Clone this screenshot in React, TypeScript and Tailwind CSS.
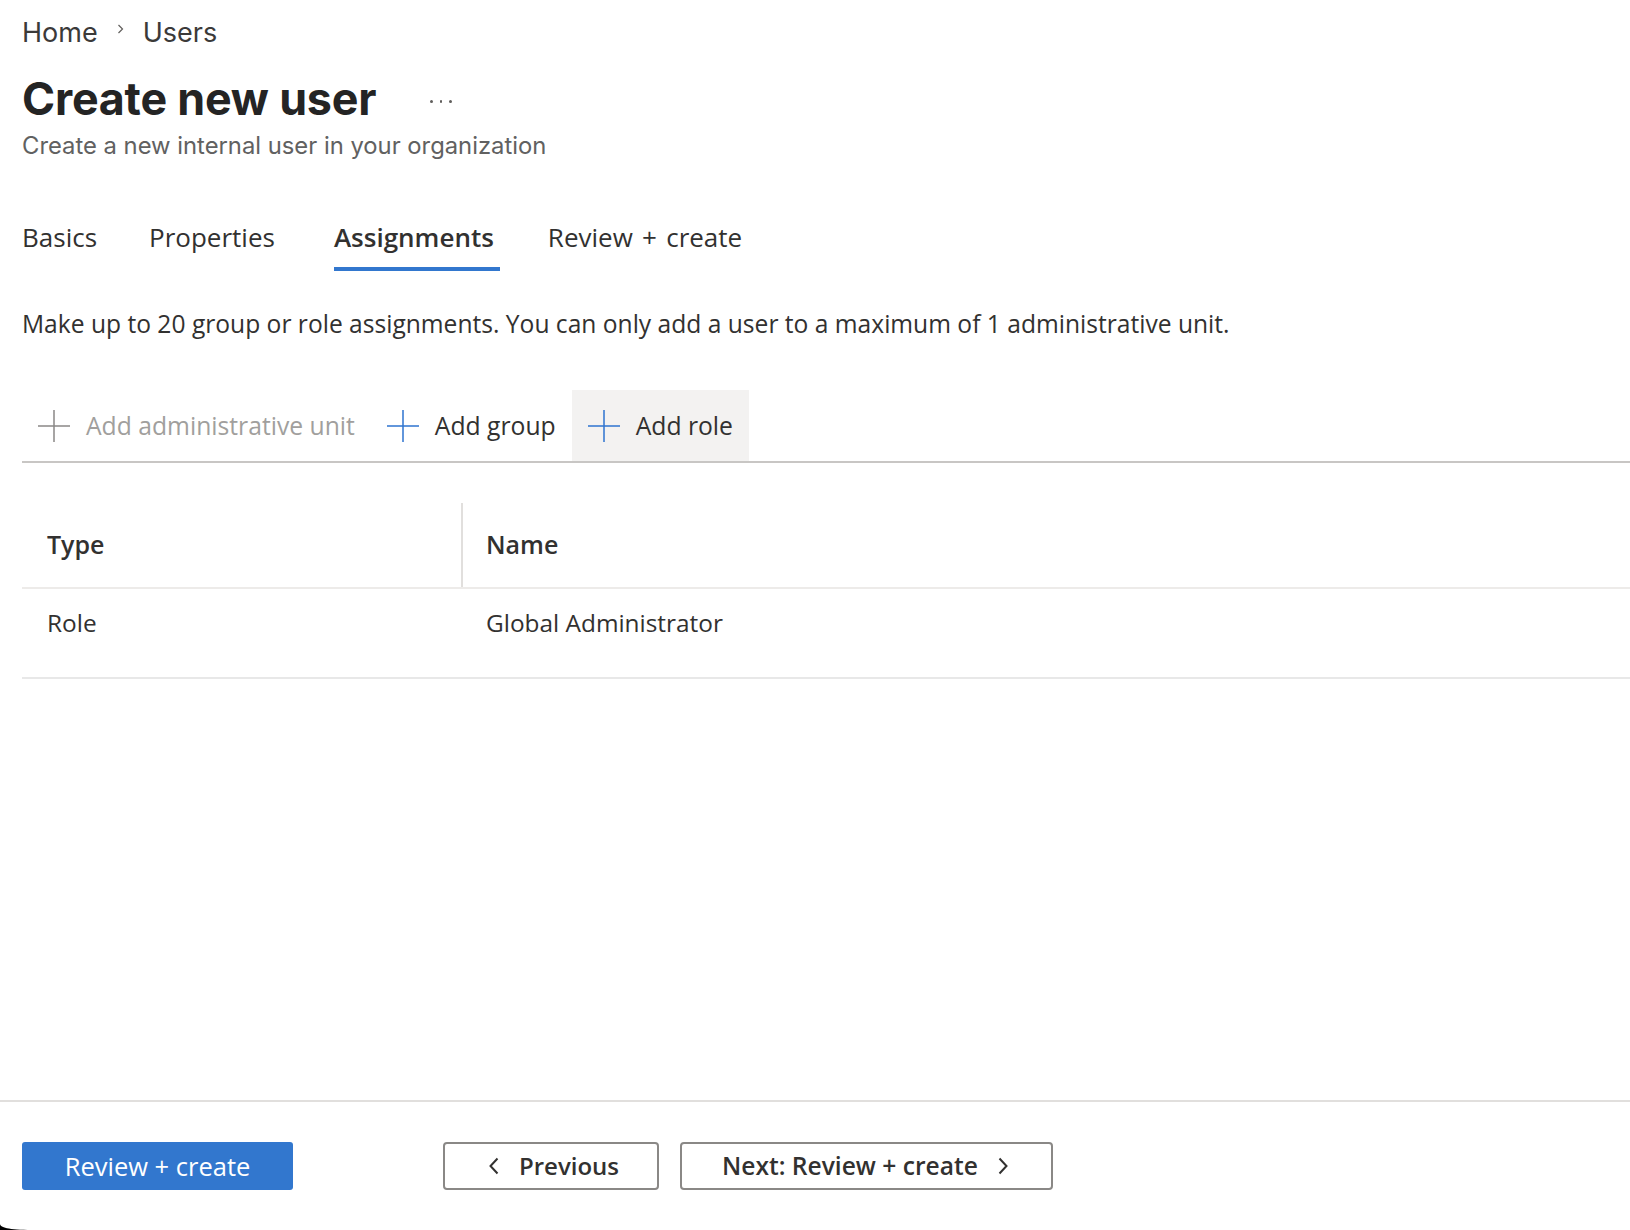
import React from 'react';

const ui = { fontFamily: '"Open Sans", "Noto Sans", sans-serif' };
const head = { fontFamily: 'Inter, "Liberation Sans", sans-serif' };

const PlusIcon: React.FC<{ color: string }> = ({ color }) => (
  <svg width="32" height="32" viewBox="0 0 32 32" fill="none">
    <path d="M16 0v32M0 16h32" stroke={color} strokeWidth="1.5" />
  </svg>
);

const Chevron: React.FC<{ dir: 'left' | 'right' }> = ({ dir }) => (
  <svg width="11" height="18" viewBox="0 0 11 18" fill="none">
    <path
      d={dir === 'left' ? 'M9.5 1.5L2.5 9l7 7.5' : 'M1.5 1.5L8.5 9l-7 7.5'}
      stroke="#323130"
      strokeWidth="2"
    />
  </svg>
);

const tabs = [
  { label: 'Basics', gap: 'mr-[52px]' },
  { label: 'Properties', gap: 'mr-[59px]' },
  { label: 'Assignments', gap: 'mr-[54px]' },
  { label: 'Review + create', gap: 'mr-0 [word-spacing:2.5px]' },
];

const toolbar = [
  { label: 'Add administrative unit', disabled: true, active: false },
  { label: 'Add group', disabled: false, active: false },
  { label: 'Add role', disabled: false, active: true },
];

export default function App() {
  return (
    <div className="relative w-full h-[1230px] bg-white flex flex-col text-[#323130]" style={ui}>
      <div className="flex-1 pl-[22px]">
        {/* header */}
        <div className="h-[65px] pt-[1px] flex items-center text-[27px] text-[#3b3a39]" style={head}>
          <span>Home</span>
          <svg width="7" height="10" viewBox="0 0 7 10" className="mx-[19px] mb-[8px]" fill="none">
            <path d="M1.5 1l4 4-4 4" stroke="#605e5c" strokeWidth="1.2" />
          </svg>
          <span>Users</span>
        </div>
        <div className="h-[67px] pt-[2px] flex items-center" style={head}>
          <h1 className="text-[44.8px] font-bold text-[#242424] tracking-[-0.2px]">Create new user</h1>
          <div className="flex gap-[7px] ml-[54px] mt-[4px]">
            <span className="w-[2.5px] h-[2.5px] rounded-full bg-[#605e5c]" />
            <span className="w-[2.5px] h-[2.5px] rounded-full bg-[#605e5c]" />
            <span className="w-[2.5px] h-[2.5px] rounded-full bg-[#605e5c]" />
          </div>
        </div>
        <div className="h-[28px] flex items-center text-[23.8px] text-[#616161]" style={head}>
          Create a new internal user in your organization
        </div>

        {/* tabs */}
        <div className="flex mt-[59px]">
          {tabs.map((t) => {
            const active = t.label === 'Assignments';
            return (
              <div key={t.label} className={`flex flex-col ${t.gap}`}>
                <div
                  className={`h-[36px] flex items-center text-[26px] text-[#323130] ${
                    active ? 'font-semibold' : ''
                  }`}
                >
                  {t.label}
                </div>
                <div className={`mt-[12px] h-[4px] ${active ? 'bg-[#3277ce] -mr-[6px]' : 'bg-transparent'}`} />
              </div>
            );
          })}
        </div>

        <p className="mt-[35px] h-[36px] flex items-center text-[24.6px] text-[#323130]">
          Make up to 20 group or role assignments. You can only add a user to a maximum of 1 administrative unit.
        </p>

        {/* command bar */}
        <div className="mt-[48px] flex border-b-2 border-[#c8c6c4]">
          {toolbar.map((b) => (
            <button
              key={b.label}
              className={`h-[71px] px-[16px] flex items-center gap-[16px] text-[24.7px] ${
                b.active ? 'bg-[#f3f2f1]' : ''
              } ${b.disabled ? 'text-[#a19f9d]' : 'text-[#323130]'}`}
            >
              <PlusIcon color={b.disabled ? '#8a8886' : '#2f74cf'} />
              {b.label}
            </button>
          ))}
        </div>

        {/* table */}
        <div className="mt-[40px]">
          <div className="flex h-[86px] border-b-2 border-[#edebe9]">
            <div className="w-[439px] pl-[25px] flex items-center text-[25px] font-semibold">Type</div>
            <div className="w-[2px] h-[84px] bg-[#e1dfdd]" />
            <div className="flex-1 pl-[23px] flex items-center text-[25px] font-semibold">Name</div>
          </div>
          <div className="flex h-[90px] border-b-2 border-[#e8e8e8] pt-[16px]">
            <div className="w-[441px] pl-[25px] h-[36px] flex items-center text-[24.4px]">Role</div>
            <div className="flex-1 pl-[23px] h-[36px] flex items-center text-[24.4px]">Global Administrator</div>
          </div>
        </div>
      </div>

      {/* footer */}
      <div className="h-[130px] border-t-2 border-[#e1dfdd] pt-[40px] pl-[22px] flex items-start">
        <button className="w-[271px] h-[48px] rounded-[3px] bg-[#3277ce] text-white text-[25.5px] flex items-center justify-center">
          Review + create
        </button>
        <button className="ml-[150px] w-[216px] h-[48px] rounded-[4px] border-2 border-[#8a8886] flex items-center pl-[43px] gap-[20px] text-[24px] font-semibold text-[#323130]">
          <Chevron dir="left" />
          Previous
        </button>
        <button className="ml-[21px] w-[373px] h-[48px] rounded-[4px] border-2 border-[#8a8886] flex items-center pl-[40px] gap-[20px] text-[24.6px] font-semibold text-[#323130]">
          Next: Review + create
          <Chevron dir="right" />
        </button>
      </div>

      {/* window corner */}
      <svg className="absolute left-0 bottom-0" width="32" height="6" viewBox="0 0 32 6">
        <path d="M0 0C0 3 8 6 32 6H0Z" fill="#000" />
      </svg>
    </div>
  );
}
